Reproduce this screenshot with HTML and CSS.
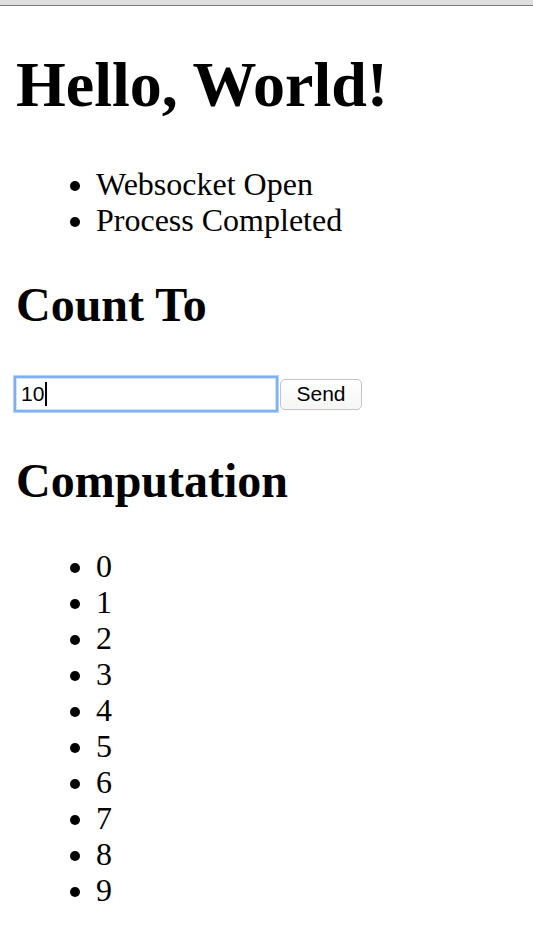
FILE: index.html
```html
<!DOCTYPE html>
<html>
<head>
<meta charset="utf-8">
<title>Hello, World!</title>
<link rel="stylesheet" href="styles.css">
</head>
<body>
<div class="chrome"></div>
<main class="page">
  <h1 class="title">Hello, World!</h1>
  <ul class="list">
    <li>Websocket Open</li>
    <li>Process Completed</li>
  </ul>
  <h2 class="heading">Count To</h2>
  <form class="form">
    <div class="field" role="textbox"><span class="value">10</span><span class="caret"></span></div>
    <button class="btn" type="button">Send</button>
  </form>
  <h2 class="heading">Computation</h2>
  <ul class="list">
    <li>0</li>
    <li>1</li>
    <li>2</li>
    <li>3</li>
    <li>4</li>
    <li>5</li>
    <li>6</li>
    <li>7</li>
    <li>8</li>
    <li>9</li>
  </ul>
</main>
</body>
</html>
```
FILE: styles.css
```css
html, body {
  margin: 0;
  padding: 0;
  background: #ffffff;
}
body {
  font-family: "Liberation Serif", "Times New Roman", serif;
  font-size: 32px;
  line-height: 36px;
  color: #000;
  overflow: hidden;
}
.chrome {
  height: 5px;
  background: #dedede;
  border-bottom: 1px solid #7b7b7b;
}
.page {
  padding: 0 16px;
}
.title {
  font-size: 64px;
  line-height: 72px;
  font-weight: bold;
  margin: 42.88px 0 45px 0;
}
.list {
  margin: 32px 0;
  padding-left: 80px;
}
.heading {
  font-size: 48px;
  line-height: 54px;
  font-weight: bold;
  margin: 39.84px 0;
}
.form {
  display: flex;
  align-items: center;
  gap: 4px;
  margin: 0;
  padding: 6px 0 5px 0;
}
.field {
  box-sizing: border-box;
  width: 260px;
  height: 32px;
  border: 1px solid #cfe3fb;
  box-shadow: 0 0 0 2px #7db1f3, 0 0 0 3px #b5d3f8;
  display: flex;
  align-items: center;
  padding-left: 4px;
  font-family: "Liberation Sans", Arial, sans-serif;
  font-size: 21px;
  line-height: 24px;
  background: #fff;
}
.caret {
  display: inline-block;
  width: 2px;
  height: 24px;
  background: #000;
  margin-left: 1px;
}
.btn {
  box-sizing: border-box;
  width: 82px;
  height: 31px;
  border: 1px solid #c4c4c4;
  border-radius: 5px;
  background: linear-gradient(#ffffff, #f6f6f6);
  font-family: "Liberation Sans", Arial, sans-serif;
  font-size: 21px;
  color: #000;
  padding: 0;
  margin-top: 1px;
}
```
